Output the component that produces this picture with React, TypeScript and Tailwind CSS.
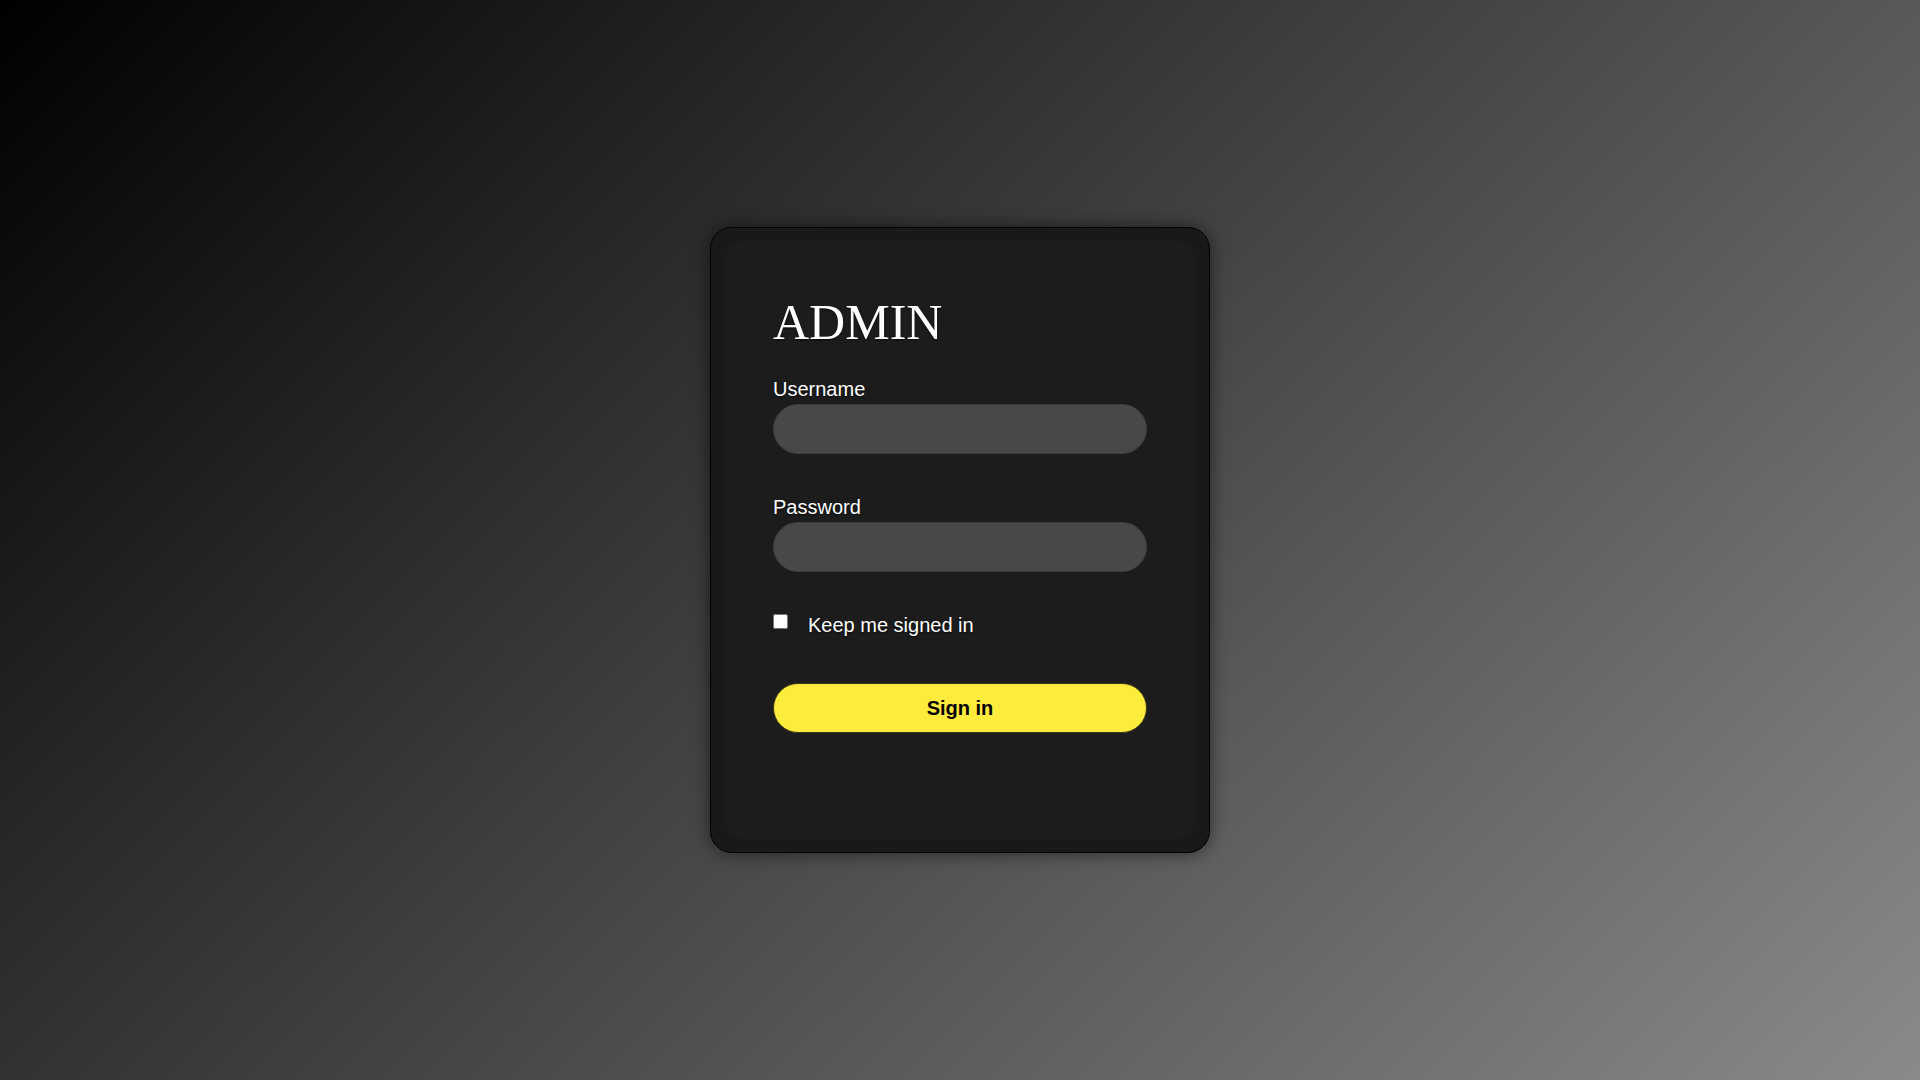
import React from 'react';

const sans = "font-['Liberation_Sans',Arial,sans-serif]";

const Field: React.FC<{ label: string; type: string; className?: string }> = ({ label, type, className }) => (
  <div className={className}>
    <label className={`block text-[20px] leading-[24px] text-white [text-shadow:0_1px_2px_rgba(0,0,0,0.7)] ${sans}`}>{label}</label>
    <input
      type={type}
      className="mt-[3px] block w-full h-[50px] rounded-full bg-[#484848] border border-[#3f3f3f] px-5 text-white outline-none"
    />
  </div>
);

const App: React.FC = () => {
  return (
    <div className="w-full h-screen flex items-center justify-center bg-[linear-gradient(135deg,#000000,#8a8a8a)]">
      <div className="w-[500px] h-[626px] rounded-[22px] bg-[#191919] border border-black p-[13px] shadow-[0_0_18px_rgba(0,0,0,0.55)]">
        <div className="h-full rounded-[20px] bg-[#1c1c1c] pt-[56px] px-[49px]">
          <h1 className="text-[50px] leading-[50px] text-white font-['Liberation_Serif','Times_New_Roman',serif] [text-shadow:0_1px_2px_rgba(0,0,0,0.7)]">
            ADMIN
          </h1>
          <Field label="Username" type="text" className="mt-[30px]" />
          <Field label="Password" type="password" className="mt-[41px]" />
          <div className="mt-[41px] flex items-start h-[24px]">
            <input type="checkbox" className="mt-[1px] w-[15px] h-[15px]" />
            <span className={`ml-5 text-[20px] leading-[24px] text-white [text-shadow:0_1px_2px_rgba(0,0,0,0.7)] ${sans}`}>
              Keep me signed in
            </span>
          </div>
          <button
            className={`mt-[46px] block w-full h-[50px] rounded-full bg-[#ffeb3b] border border-[#3a3a1a] text-black font-bold text-[20px] leading-[48px] ${sans}`}
          >
            Sign in
          </button>
        </div>
      </div>
    </div>
  );
};

export default App;
